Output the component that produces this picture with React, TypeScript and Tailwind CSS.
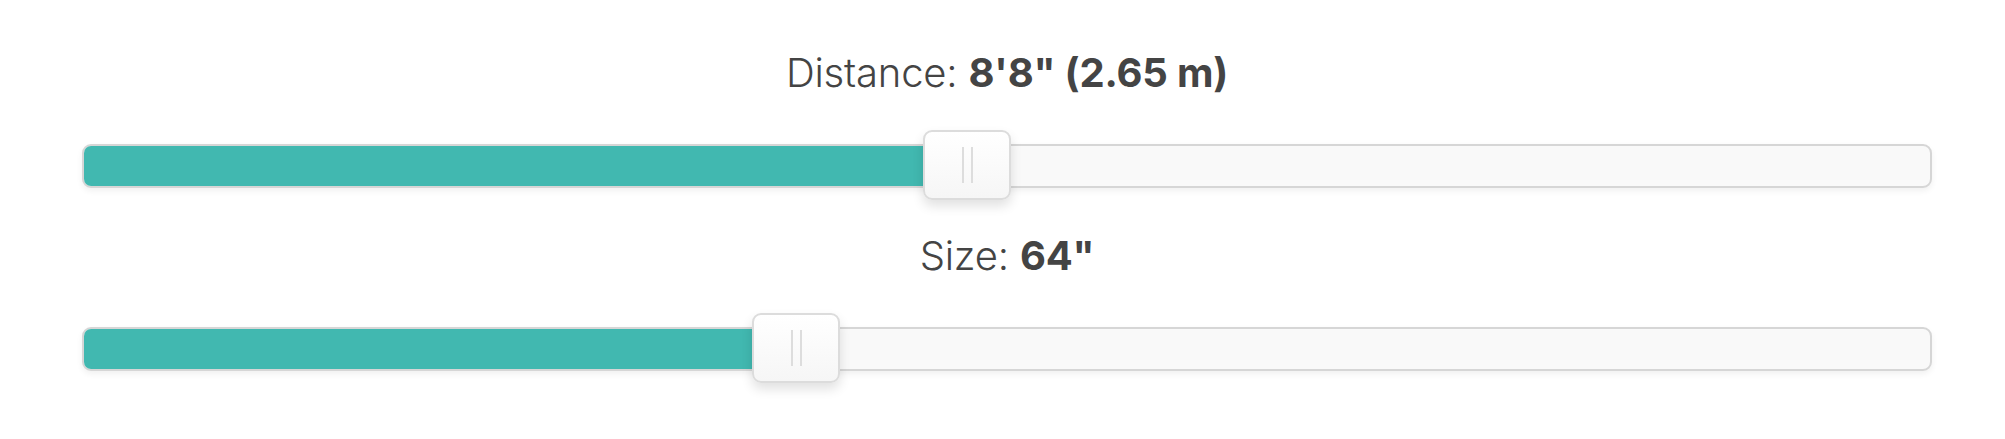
import React from "react";

function Slider({ pct }: { pct: number }) {
  return (
    <div className="relative h-[44px] w-[1850px]">
      <div className="absolute inset-0 rounded-[9px] border-2 border-[#d6d6d6] bg-[#f9f9f9] shadow-[0_3px_6px_rgba(0,0,0,0.06)] overflow-hidden">
        <div className="h-full bg-[#41b8b0]" style={{ width: `${pct}%` }} />
      </div>
      <div
        className="absolute top-[-14px] h-[70px] w-[88px] -translate-x-1/2 rounded-[9px] border-2 border-[#dcdcdc] bg-gradient-to-b from-[#ffffff] to-[#f6f6f6] shadow-[0_6px_12px_rgba(0,0,0,0.12)] flex items-center justify-center gap-[7px]"
        style={{ left: `${pct}%` }}
      >
        <div className="h-[36px] w-[2px] bg-[#dddddd]" />
        <div className="h-[36px] w-[2px] bg-[#dddddd]" />
      </div>
    </div>
  );
}

export default function App() {
  return (
    <div
      className="w-[2005px] h-[439px] bg-white pl-[82px] pt-[49px] text-[#444444]"
      style={{ fontFamily: "Inter, 'Noto Sans', sans-serif" }}
    >
      <div className="w-[1850px] flex flex-col items-center">
        <div className="text-[40px] leading-[48px] tracking-[-0.2px] font-light">
          Distance: <span className="font-bold">8'8" (2.65 m)</span>
        </div>
        <div className="mt-[47px]">
          <Slider pct={47.84} />
        </div>
        <div className="mt-[44px] text-[40px] leading-[48px] tracking-[-0.2px] font-light">
          Size: <span className="font-bold">64"</span>
        </div>
        <div className="mt-[47px]">
          <Slider pct={38.6} />
        </div>
      </div>
    </div>
  );
}
